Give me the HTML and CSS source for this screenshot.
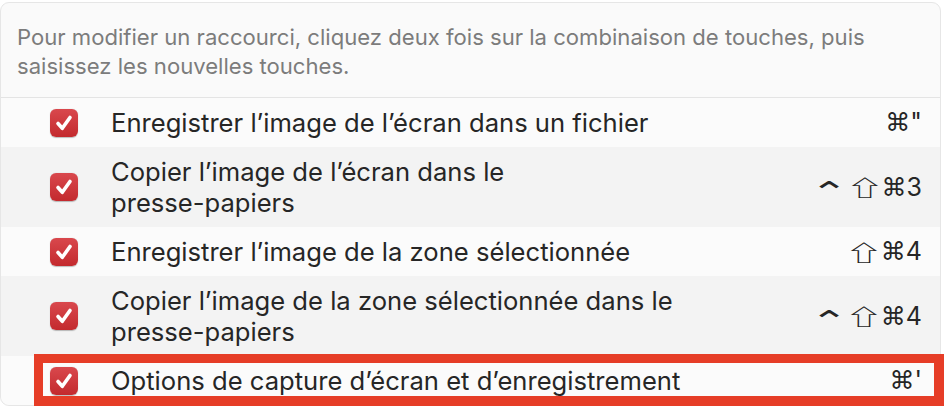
FILE: index.html
```html
<!DOCTYPE html>
<html lang="fr">
<head>
<meta charset="utf-8">
<link rel="stylesheet" href="styles.css">
</head>
<body>
<div class="panel">
  <div class="header">Pour modifier un raccourci, cliquez deux fois sur la combinaison de touches, puis saisissez les nouvelles touches.</div>
  <div class="row light">
    <span class="check"><svg viewBox="0 0 28 28" width="28" height="28"><path d="M8 14.5 L12.3 19.3 L20 8.5" fill="none" stroke="#fff" stroke-width="3.6" stroke-linecap="round" stroke-linejoin="round"/></svg></span>
    <span class="label">Enregistrer l’image de l’écran dans un fichier</span>
    <span class="keys"><span class="sym">⌘</span>"</span>
  </div>
  <div class="row dark">
    <span class="check"><svg viewBox="0 0 28 28" width="28" height="28"><path d="M8 14.5 L12.3 19.3 L20 8.5" fill="none" stroke="#fff" stroke-width="3.6" stroke-linecap="round" stroke-linejoin="round"/></svg></span>
    <span class="label">Copier l’image de l’écran dans le<br>presse-papiers</span>
    <span class="keys"><span class="sym ctrl">⌃</span><span class="sym shift">⇧</span><span class="sym">⌘</span>3</span>
  </div>
  <div class="row light">
    <span class="check"><svg viewBox="0 0 28 28" width="28" height="28"><path d="M8 14.5 L12.3 19.3 L20 8.5" fill="none" stroke="#fff" stroke-width="3.6" stroke-linecap="round" stroke-linejoin="round"/></svg></span>
    <span class="label">Enregistrer l’image de la zone sélectionnée</span>
    <span class="keys"><span class="sym shift">⇧</span><span class="sym">⌘</span>4</span>
  </div>
  <div class="row dark">
    <span class="check"><svg viewBox="0 0 28 28" width="28" height="28"><path d="M8 14.5 L12.3 19.3 L20 8.5" fill="none" stroke="#fff" stroke-width="3.6" stroke-linecap="round" stroke-linejoin="round"/></svg></span>
    <span class="label">Copier l’image de la zone sélectionnée dans le<br>presse-papiers</span>
    <span class="keys"><span class="sym ctrl">⌃</span><span class="sym shift">⇧</span><span class="sym">⌘</span>4</span>
  </div>
  <div class="row light last">
    <span class="check"><svg viewBox="0 0 28 28" width="28" height="28"><path d="M8 14.5 L12.3 19.3 L20 8.5" fill="none" stroke="#fff" stroke-width="3.6" stroke-linecap="round" stroke-linejoin="round"/></svg></span>
    <span class="label">Options de capture d’écran et d’enregistrement</span>
    <span class="keys"><span class="sym">⌘</span>'</span>
    <div class="highlight"></div>
  </div>
</div>
</body>
</html>
```
FILE: styles.css
```css
html, body {
  margin: 0;
  padding: 0;
  background: #ffffff;
}
body {
  width: 944px;
  height: 408px;
  overflow: hidden;
  font-family: Inter, "Liberation Sans", "DejaVu Sans", sans-serif;
  padding-top: 2px;
  box-sizing: border-box;
}
.panel {
  width: 941px;
  border: 1px solid #e6e6e6;
  border-radius: 9px;
  background: #fafafa;
  box-sizing: border-box;
  position: relative;
}
.header {
  padding: 20px 20px 16px 16px;
  font-size: 22.1px;
  line-height: 29px;
  color: #7c7c7c;
  border-bottom: 1px solid #e4e4e4;
}
.row {
  display: flex;
  align-items: center;
  padding: 9px 18px 9px 49px;
  position: relative;
}
.row.light { background: #fbfbfb; }
.row.dark { background: #f3f3f3; }
.row.last { border-radius: 0 0 9px 9px; }
.check {
  width: 28px;
  height: 28px;
  border-radius: 6px;
  background: linear-gradient(#d9484d, #c32a2e);
  box-shadow: 0 0.5px 1px rgba(0,0,0,0.25);
  flex: none;
  display: flex;
}
.label {
  margin-left: 33px;
  flex: 1;
  font-size: 25.6px;
  line-height: 31px;
  color: #262626;
}
.keys {
  font-size: 25px;
  line-height: 31px;
  color: #262626;
  display: flex;
  align-items: center;
}
.sym {
  font-family: "DejaVu Sans", sans-serif;
  font-size: 25px;
  display: inline-block;
}
.ctrl {
  font-family: "Noto Sans CJK JP", "DejaVu Sans", sans-serif;
  font-size: 24px;
  line-height: 20px;
  transform: translateY(3px) scale(1.9, 1.2);
  margin: 0 9px 0 4px;
}
.shift {
  font-family: "Noto Sans CJK JP", "DejaVu Sans", sans-serif;
  font-size: 24px;
  line-height: 20px;
  transform: scale(1.6, 0.9);
  margin: 0 5px 0 4px;
}
.highlight {
  position: absolute;
  left: 33px;
  top: -2px;
  right: -4px;
  bottom: -1px;
  border: 9px solid #e63d27;
  border-right-width: 10px;
  border-bottom-width: 10px;
  pointer-events: none;
}
```
